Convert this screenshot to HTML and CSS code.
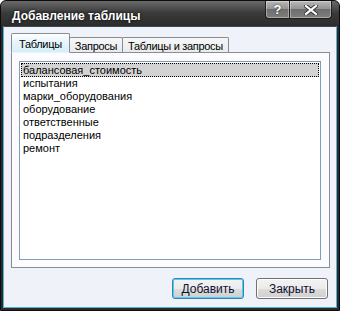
FILE: index.html
```html
<!DOCTYPE html>
<html lang="ru">
<head>
    <meta charset="UTF-8">
    <title>Добавление таблицы</title>
    <link rel="stylesheet" href="styles.css">
</head>
<body>
    <div class="window">
        <div class="titlebar">
            <span class="title">Добавление таблицы</span>
            <div class="caption-buttons">
                <span class="cbtn help">?</span>
                <span class="cbtn close">
                    <svg width="14" height="10" viewBox="0 0 14 10">
                        <path d="M2 1 L12 9 M12 1 L2 9" stroke="#333" stroke-width="4" stroke-linecap="square"/>
                        <path d="M2 1 L12 9 M12 1 L2 9" stroke="#fff" stroke-width="2.2" stroke-linecap="square"/>
                    </svg>
                </span>
            </div>
        </div>
        <div class="client">
            <div class="tabs">
                <div class="tab active">Таблицы</div>
                <div class="tab">Запросы</div>
                <div class="tab">Таблицы и запросы</div>
            </div>
            <div class="panel">
                <ul class="list">
                    <li class="selected">балансовая_стоимость</li>
                    <li>испытания</li>
                    <li>марки_оборудования</li>
                    <li>оборудование</li>
                    <li>ответственные</li>
                    <li>подразделения</li>
                    <li>ремонт</li>
                </ul>
            </div>
            <div class="actions">
                <button class="btn default">Добавить</button>
                <button class="btn">Закрыть</button>
            </div>
        </div>
    </div>
</body>
</html>
```

FILE: styles.css
```css
/* Dialog window */
body {
    margin: 0;
    background: #fff;
    font-family: "Liberation Sans", Arial, sans-serif;
    font-size: 11px;
}
.window {
    width: 340px;
    height: 311px;
    box-sizing: border-box;
    display: flex;
    flex-direction: column;
    background: linear-gradient(#6a6a6a, #3a3a3a 12px, #2b2b2b 26px, #2b2b2b);
    border: 1px solid #0c0c0c;
    border-radius: 6px 6px 0 0;
    padding: 0 2px 2px;
}
.titlebar {
    height: 25px;
    display: flex;
    justify-content: space-between;
    align-items: flex-start;
}
.title {
    color: #fff;
    font-weight: bold;
    font-size: 12px;
    padding: 8px 0 0 9px;
    text-shadow: 0 0 3px #000;
}
.caption-buttons {
    display: flex;
    margin-right: 5px;
}
.cbtn {
    height: 18px;
    display: flex;
    align-items: center;
    justify-content: center;
    box-sizing: border-box;
    border: 1px solid #1e1e1e;
    border-top: none;
    box-shadow: inset 0 0 0 1px rgba(255, 255, 255, 0.35);
    background: linear-gradient(#b8b8b8, #959595 45%, #6e6e6e 50%, #7e7e7e);
    color: #fff;
    font-weight: bold;
    font-size: 13px;
    text-shadow: 0 0 2px #222;
}
.help {
    width: 25px;
    border-radius: 0 0 0 4px;
}
.close {
    width: 43px;
    margin-left: -1px;
    border-radius: 0 0 4px 0;
}
.client {
    flex: 1;
    display: flex;
    flex-direction: column;
    background: #eff3f9;
    border: 1px solid #4eb4de;
    border-top-color: #3a4a55;
    padding: 6px 6px 8px 7px;
}
/* Tabs */
.tabs {
    display: flex;
    align-items: flex-end;
    height: 20px;
    margin-bottom: -1px;
}
.tab {
    height: 16px;
    box-sizing: border-box;
    padding: 2px 5px 0;
    border: 1px solid #898c95;
    border-bottom: none;
    border-radius: 2px 2px 0 0;
    background: linear-gradient(#f7f7f7, #e7eaee);
    color: #000;
    letter-spacing: -0.3px;
    margin-left: -1px;
}
.tab.active {
    height: 20px;
    padding: 4px 7px 0;
    margin-left: 0;
    background: linear-gradient(#ffffff, #e9f6fc 40%, #d6eef9);
    border-bottom: 1px solid #e6f4fb;
    position: relative;
    z-index: 1;
}
.panel {
    flex: 1;
    display: flex;
    border: 1px solid #898c95;
    background: #fcfcfe;
    padding: 8px 8px 7px 7px;
}
.list {
    flex: 1;
    list-style: none;
    margin: 0;
    padding: 1px 1px;
    border: 1px solid #7f9db9;
    background: #fff;
}
.list li {
    height: 13px;
    line-height: 13px;
    padding-left: 2px;
    color: #000;
}
.list li.selected {
    height: 12px;
    line-height: 12px;
    background: #d3d3d3;
    border: 1px dotted #000;
    padding-left: 1px;
}
/* Buttons */
.actions {
    display: flex;
    justify-content: flex-end;
    gap: 12px;
    margin-top: 10px;
    margin-right: 2px;
}
.btn {
    width: 72px;
    height: 21px;
    border: 1px solid #707070;
    border-radius: 3px;
    background: linear-gradient(#f3f3f3, #ebebeb 50%, #dddddd 50%, #cfcfcf);
    box-shadow: inset 0 0 0 1px #fcfcfc;
    font-family: "Liberation Sans", Arial, sans-serif;
    font-size: 12px;
    color: #101030;
    padding: 0;
}
.btn.default {
    border-color: #3c7fb1;
    box-shadow: inset 0 0 0 1px #48d0f8;
}
```
